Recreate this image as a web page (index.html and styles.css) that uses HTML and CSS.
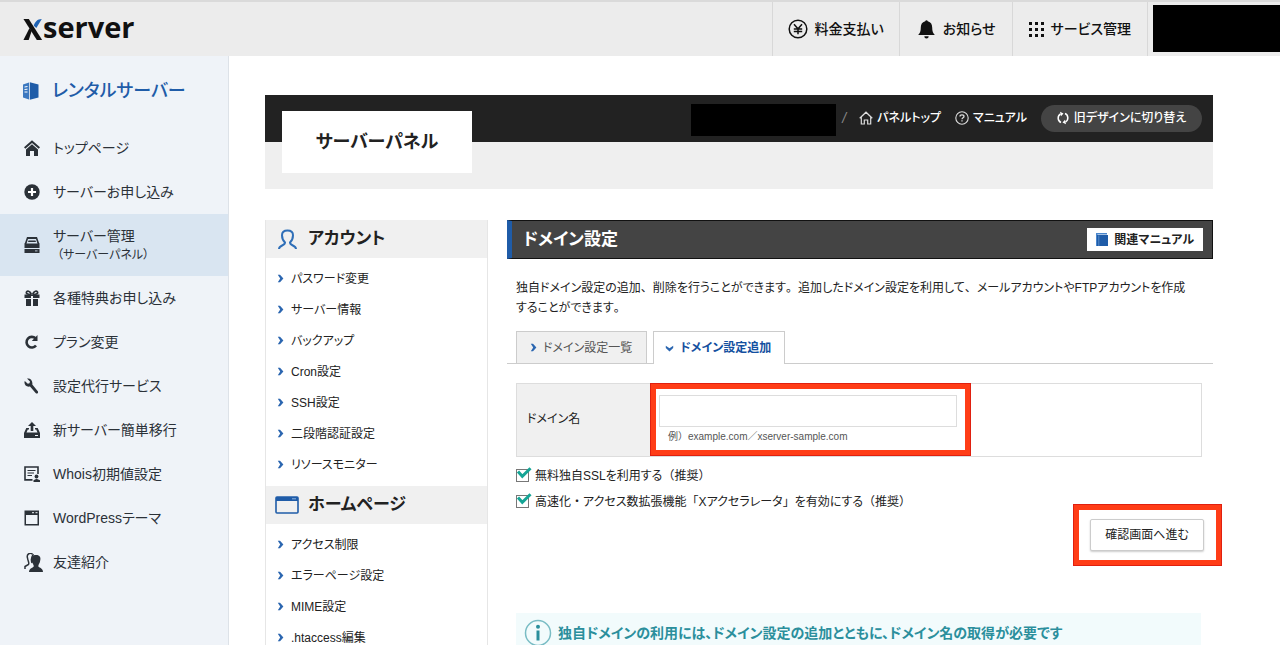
FILE: index.html
```html
<!DOCTYPE html>
<html lang="ja">
<head>
<meta charset="utf-8">
<meta name="viewport" content="width=device-width, initial-scale=1">
<title>ドメイン設定 | サーバーパネル</title>
<link rel="stylesheet" href="styles.css">
</head>
<body>
<svg class="defs" aria-hidden="true">
  <symbol id="chev" viewBox="0 0 7 9"><path d="M0.8 0.8H3L6.4 4.5 3 8.2H0.8L3.2 4.5z" fill="#2b66b0"/></symbol>
  <symbol id="tick" viewBox="0 0 16 15"><path d="M2 4.600L6.300 9.300 14.500 1.200" fill="none" stroke="#16a596" stroke-width="3"/></symbol>
</svg>
<div class="app">
  <header class="top">
    <a class="logo" href="#" aria-label="Xserver">
      <svg class="logo-x" viewBox="0 0 20 22" aria-hidden="true"><path d="M0 0H5.600L19.600 22H14z" fill="#111"/><path d="M8.600 12.600L5.500 22H0L6.200 9.600z" fill="#111"/><path d="M10.800 7C12 3 14.500 0 19.200 0L13.500 9.500z" fill="#1f63b5"/></svg><span>server</span>
    </a>
    <nav class="top-nav">
      <a href="#"><svg width="20" height="20" viewBox="0 0 20 20" fill="none" stroke="#111" stroke-width="1.5"><circle cx="10" cy="10" r="8.8"/><path d="M6 5.2L10 9.8 14 5.2M10 9.8V15.2M5.8 10H14.2M5.8 12.6H14.2"/></svg>料金支払い</a>
      <a href="#" class="news"><svg width="17" height="20" viewBox="0 0 17 20"><path d="M7.2 2.2a1.4 1.4 0 012.6 0C13 3 14.2 5.6 14.2 8.6c0 4 .8 5.6 2.6 7.4H.2C2 14.200 2.800 12.600 2.800 8.600c0-3 1.200-5.600 4.400-6.400zM6.300 17.200h4.400a2.200 2.200 0 01-4.400 0z" fill="#111"/></svg>お知らせ</a>
      <a href="#" class="svc"><svg width="15" height="15" viewBox="0 0 15 15"><path d="M0 0h3v3H0zM6 0h3v3H6zM12 0h3v3h-3zM0 6h3v3H0zM6 6h3v3H6zM12 6h3v3h-3zM0 12h3v3H0zM6 12h3v3H6zM12 12h3v3h-3z" fill="#111"/></svg>サービス管理</a>
      <div class="masked-user"></div>
    </nav>
  </header>
  <div class="body">
    <aside class="side">
      <a class="side-title" href="#"><svg width="16" height="18" viewBox="0 0 16 18"><path d="M0 2.500L6 .5V17.500L0 15.500z" fill="#3c78c0"/><path d="M6.800 0.300L15.500 2.600V15.400L6.800 17.700z" fill="#1f5ca8"/><path d="M1.500 5L4.500 4.500M1.500 7.500L4.500 7.200M1.500 10H4.500" stroke="#fff"/></svg>レンタルサーバー</a>
      <nav class="side-nav">
        <a href="#"><svg viewBox="0 0 16 16"><path d="M8 .3L16 7.200 14.700 8.700 8 3 1.300 8.700 0 7.200z"/><path d="M8 4.300L14 9.400V16H10V11H6V16H2V9.400z"/></svg>トップページ</a>
        <a href="#"><svg viewBox="0 0 16 16"><circle cx="8" cy="8" r="7.700"/><path d="M8 4V12M4 8H12" stroke="#fff" stroke-width="2.200"/></svg>サーバーお申し込み</a>
        <a href="#" class="current"><svg viewBox="0 0 16 16"><path d="M3 0H13L15.400 7H13.600L12 2H4L2.400 7H.6z"/><path d="M4.500 3.500H11.500L12 5H4zM0.500 6.500H15.500V11H.5zM.5 12H15.500V16H.5z"/><path d="M11 13.900H13.500" stroke="#d9e5f1" stroke-width=".8"/></svg><span>サーバー管理<small>（サーバーパネル）</small></span></a>
        <a href="#"><svg viewBox="0 0 16 16"><path d="M.5 4.500H15.500V8H9V6H7V8H.5zM2 9H7V16H2zM9 9H14V16H9z"/><path d="M7 4.500C3 4.500 2 3.500 2.500 2S6 .5 7.500 4.500M9 4.500C13 4.500 14 3.500 13.500 2S10 .5 8.500 4.500" fill="none" stroke="#2b3138" stroke-width="1.700"/></svg>各種特典お申し込み</a>
        <a href="#"><svg viewBox="0 0 16 16"><path d="M12 11.500A5.300 5.300 0 1111.500 4.300" fill="none" stroke="#2b3138" stroke-width="2.600"/><path d="M13.500 1V7H7.800z"/></svg>プラン変更</a>
        <a href="#"><svg viewBox="0 0 16 16"><path d="M3 .6L6 3.500 5.500 5.200 3.800 5.800.8 2.900C-.5 6 2 9.500 6 8.600L11.600 15C13 16.500 15 14.700 13.600 13L8.300 6.500C9 2.500 6 -.3 3 .6z"/></svg>設定代行サービス</a>
        <a href="#"><svg viewBox="0 0 16 16"><path d="M8 0L12 4H9.300V9H6.700V4H4z"/><path d="M2.300 6H5V7.500H3.800L2.500 10.500H13.500L12.200 7.500H11V6H13.700L16 11V16H0V11z"/><path d="M11 13.500H14" stroke="#eff3f8"/></svg>新サーバー簡単移行</a>
        <a href="#"><svg viewBox="0 0 16 16"><path d="M8.500 13.900H1V1H14V8" fill="none" stroke="#2b3138" stroke-width="1.600"/><path d="M3.500 4.500H11.500M3.500 7H10M3.500 9.500H8" stroke="#2b3138" stroke-width="1.200"/><circle cx="12.500" cy="10.500" r="1.900"/><path d="M9.500 16V14.300L12.500 12.800 16 14.300V16z"/></svg>Whois初期値設定</a>
        <a href="#"><svg viewBox="0 0 16 16"><path d="M.5 .5H15V15.500H.5zM2 5V14H13.500V5z" fill-rule="evenodd"/><path d="M8 2.700H10M11.500 2.700H13.500" stroke="#eff3f8"/></svg>WordPressテーマ</a>
        <a href="#"><svg class="wide" viewBox="0 0 19 19"><path d="M8.500 1C5 -1 2.500 2 3.500 5 4 8.500 5.500 9.500 4.500 11.500L1 13.500V16M9.500 1.300C7 4 7 7 8 10" fill="none" stroke="#2b3138" stroke-width="1.500"/><path d="M12 2C16 2 17 4.500 16.200 7.500 16 10 14.500 11 14.300 13 14.500 15 19 14.500 19 19H5C5 15 9.500 15 9.800 13 9.500 11 8 10 7.800 7.500 7 4.500 8 2 12 2z"/></svg>友達紹介</a>
      </nav>
    </aside>
    <main class="main">
      <div class="banner">
        <h1>サーバーパネル</h1>
        <nav class="banner-nav">
          <span class="masked-id"></span><i>/</i>
          <a href="#"><svg width="14" height="14" viewBox="0 0 14 14" fill="none" stroke="#ddd" stroke-width="1.200"><path d="M.7 7.300L7 1.200 13.300 7.300M2.300 6V13H5.300V9H8.700V13H11.700V6"/></svg>パネルトップ</a>
          <a href="#"><svg width="14" height="14" viewBox="0 0 14 14" fill="none" stroke="#ddd" stroke-width="1.100"><circle cx="7" cy="7" r="6.200"/><path d="M5 5.500C5 3.400 9 3.400 9 5.500 9 6.800 7 6.800 7 8.200M7 9.300V10.500" stroke-width="1.300"/></svg>マニュアル</a>
          <button class="pill" type="button"><svg width="12" height="14" viewBox="0 0 12 14" fill="none" stroke="#fff" stroke-width="1.500"><path d="M4 11.500A4.800 4.800 0 013.500 3M8 2.500A4.800 4.800 0 018.500 11"/><path d="M3 .8L6.500 2.500 4 5.200zM9 13.200L5.500 11.500 8 8.800z" fill="#fff" stroke="none"/></svg>旧デザインに切り替え</button>
        </nav>
      </div>
      <div class="cols">
        <nav class="menu">
          <h2><svg width="24" height="22" viewBox="0 0 24 22" fill="none" stroke="#2f6fb8" stroke-width="2"><path d="M4 21C4 17 10 18 10 14.500 8 12.500 7 9.500 7 7.200 7 4 9.300 2.500 12.500 2.500S18 4 18 7.200C18 9.500 17 12.500 15 14.500 15 18 21 17 21 21"/></svg>アカウント</h2>
          <ul>
            <li><a href="#"><svg><use href="#chev"/></svg>パスワード変更</a></li>
            <li><a href="#"><svg><use href="#chev"/></svg>サーバー情報</a></li>
            <li><a href="#"><svg><use href="#chev"/></svg>バックアップ</a></li>
            <li><a href="#"><svg><use href="#chev"/></svg>Cron設定</a></li>
            <li><a href="#"><svg><use href="#chev"/></svg>SSH設定</a></li>
            <li><a href="#"><svg><use href="#chev"/></svg>二段階認証設定</a></li>
            <li><a href="#"><svg><use href="#chev"/></svg>リソースモニター</a></li>
          </ul>
          <h2><svg width="24" height="18" viewBox="0 0 24 18"><rect x="1" y="1" width="22" height="16" rx="1" fill="none" stroke="#1f5ca8" stroke-width="1.600"/><path d="M1 1H23V5H1z" fill="#1f5ca8"/><path d="M17 2.800H21" stroke="#8fb4dd"/></svg>ホームページ</h2>
          <ul>
            <li><a href="#"><svg><use href="#chev"/></svg>アクセス制限</a></li>
            <li><a href="#"><svg><use href="#chev"/></svg>エラーページ設定</a></li>
            <li><a href="#"><svg><use href="#chev"/></svg>MIME設定</a></li>
            <li><a href="#"><svg><use href="#chev"/></svg>.htaccess編集</a></li>
          </ul>
        </nav>
        <section class="content">
          <div class="content-head">
            <h2>ドメイン設定</h2>
            <a href="#"><svg width="12" height="13" viewBox="0 0 12 13"><path d="M0 0H11V1.500H1.500V13H0z" fill="#4a86cc"/><path d="M1 2H12V13H1z" fill="#1f5ca8"/><path d="M2.800 2.500V13" stroke="#6fa0d8" stroke-width=".7"/></svg>関連マニュアル</a>
          </div>
          <p class="lead">独自ドメイン設定の追加<span class="full">、</span>削除を行うことができます<span class="full">。</span>追加したドメイン設定を利用して<span class="full">、</span>メールアカウントやFTPアカウントを作成することができます<span class="full">。</span></p>
          <div class="tabs">
            <a href="#"><svg><use href="#chev"/></svg>ドメイン設定一覧</a>
            <a href="#" class="on"><svg viewBox="0 0 9 7"><path d="M.8 .8V3L4.500 6.400 8.200 3V.8L4.500 3.200z" fill="#2b66b0"/></svg>ドメイン設定追加</a>
          </div>
          <form class="form">
            <div class="field">
              <label for="domain">ドメイン名</label>
              <div class="field-body">
                <input id="domain" type="text">
                <p>例<span class="full">）</span>example.com／xserver-sample.com</p>
                <span class="mark mark-field"></span>
              </div>
            </div>
            <label class="check"><span class="box"><input type="checkbox" checked><svg><use href="#tick"/></svg></span><span>無料独自SSLを利用する<span class="full">（</span>推奨<span class="full">）</span></span></label>
            <label class="check"><span class="box"><input type="checkbox" checked><svg><use href="#tick"/></svg></span><span>高速化<span class="full">・</span>アクセス数拡張機能<span class="full">「</span>Xアクセラレータ<span class="full">」</span>を有効にする<span class="full">（</span>推奨<span class="full">）</span></span></label>
            <div class="actions"><div class="action"><button type="submit">確認画面へ進む</button><span class="mark mark-button"></span></div></div>
          </form>
          <div class="info">
            <svg width="28" height="28" viewBox="0 0 28 28"><circle cx="14" cy="14" r="12.500" fill="none" stroke="#79bcc4" stroke-width="1.500"/><circle cx="14" cy="7.800" r="2" fill="#2b8f9c"/><path d="M14 11.500V21.500" stroke="#2b8f9c" stroke-width="3"/></svg>
            <strong>独自ドメインの利用には、ドメイン設定の追加とともに、ドメイン名の取得が必要です</strong>
          </div>
        </section>
      </div>
    </main>
  </div>
</div>
</body>
</html>
```
FILE: styles.css
```css
* { box-sizing: border-box; }
body {
  margin: 0;
  font-family: "Liberation Sans", "Noto Sans CJK JP", sans-serif;
  font-size: 12px;
  line-height: 20px;
  color: #222;
  background: #fff;
  font-feature-settings: "palt";
}
a { color: inherit; text-decoration: none; }
h1, h2, p, ul { margin: 0; padding: 0; }
ul { list-style: none; }
svg { flex: none; }
button { font: inherit; font-feature-settings: inherit; }
.defs { position: absolute; width: 0; height: 0; }
.full { font-feature-settings: normal; }

.app { display: flex; flex-direction: column; height: 100vh; overflow: hidden; }

/* Top bar */
.top {
  display: flex;
  flex: none;
  justify-content: space-between;
  height: 56px;
  background: #ececec;
  border-top: 2px solid #dadada;
}
.logo {
  display: flex;
  align-items: center;
  padding-left: 23px;
  font-family: "Open Sans", sans-serif;
  font-size: 29px;
  font-weight: 700;
  line-height: 32px;
  color: #111;
}
.logo-x { width: 20px; height: 21px; }
.logo span { padding-bottom: 4px; }
.top-nav { display: flex; font-size: 14px; font-weight: 500; color: #111; }
.top-nav a {
  display: flex;
  align-items: center;
  gap: 7px;
  padding: 0 15px;
  border-left: 1px solid #d8d8d8;
}
.top-nav .news { gap: 8px; padding: 0 16px 0 18px; }
.top-nav .svc { padding: 0 16px; border-right: 1px solid #d8d8d8; }
.masked-user { width: 127px; height: 47px; margin: 3px 0 0 5px; background: #000; }

.body { display: flex; flex: 1; min-height: 0; }

/* Service navigation */
.side {
  flex: none;
  width: 229px;
  background: #eff3f8;
  border-right: 1px solid #dde2e8;
}
.side-title {
  display: flex;
  align-items: center;
  gap: 13px;
  padding: 22px 0 22px 23px;
  font-size: 18px;
  font-weight: 500;
  line-height: 26px;
  color: #1f5ca8;
}
.side-nav { font-size: 14px; }
.side-nav a {
  display: flex;
  align-items: center;
  gap: 13px;
  height: 44px;
  padding-left: 24px;
  color: #2b3138;
}
.side-nav svg { width: 16px; height: 16px; fill: #2b3138; }
.side-nav .wide { width: 19px; height: 19px; margin-right: -3px; }
.side-nav .current { height: 62px; background: #d9e5f1; }
.side-nav small { display: block; font-size: 12px; line-height: 18px; padding-left: 4px; }

/* Panel banner */
.main { flex: 1; min-width: 0; padding: 39px 67px 0 36px; overflow: hidden; }
.banner {
  display: flex;
  justify-content: space-between;
  align-items: flex-start;
  height: 94px;
  padding-left: 17px;
  background: linear-gradient(#222 47px, #efefef 47px);
}
.banner h1 {
  width: 190px;
  margin-top: 16px;
  background: #fff;
  font-size: 18px;
  font-weight: 700;
  line-height: 62px;
  text-align: center;
}
.banner-nav {
  display: flex;
  align-items: center;
  gap: 14px;
  height: 46px;
  padding-right: 11px;
  font-weight: 500;
  color: #fff;
}
.banner-nav a { display: flex; align-items: center; gap: 4px; }
.banner-nav i { margin: 0 -1px 0 -8px; font-size: 14px; color: #888; }
.masked-id { width: 145px; height: 32px; background: #000; margin-top: 3px; }
.pill {
  display: flex;
  align-items: center;
  justify-content: center;
  gap: 5px;
  width: 161px;
  height: 27px;
  padding: 0;
  border: 0;
  border-radius: 14px;
  background: #444;
  color: #fff;
}

.cols { display: flex; align-items: flex-start; gap: 19px; margin-top: 31px; }

/* Panel menu */
.menu { flex: none; width: 223px; border: solid #e6e6e6; border-width: 0 1px; }
.menu h2 {
  display: flex;
  align-items: center;
  gap: 9px;
  height: 38px;
  padding-left: 9px;
  background: #f0f0f0;
  font-size: 17px;
  font-weight: 700;
}
.menu ul { padding: 5px 0 6px; }
.menu a { display: flex; align-items: center; gap: 7px; height: 31px; padding-left: 11px; }
.menu a svg, .tabs a svg { width: 7px; height: 9px; }

/* Content */
.content { flex: 1; min-width: 0; }
.content-head {
  display: flex;
  align-items: center;
  justify-content: space-between;
  height: 39px;
  padding: 0 9px 0 11px;
  border: solid #111;
  border-width: 1px 1px 1px 0;
  border-left: 5px solid #1f5ca8;
  background: #444;
}
.content-head h2 { font-size: 17px; font-weight: 700; color: #fff; }
.content-head a {
  display: flex;
  align-items: center;
  gap: 6px;
  height: 23px;
  padding: 0 9px;
  background: #fff;
  font-weight: 700;
}
.lead { padding: 19px 20px 13px 9px; }
.tabs { display: flex; gap: 6px; padding-left: 9px; border-bottom: 1px solid #ccc; }
.tabs a {
  display: flex;
  align-items: center;
  gap: 6px;
  height: 32px;
  padding: 0 14px 0 13px;
  border: 1px solid #ccc;
  border-bottom: 0;
  background: #f0f0f0;
  color: #555;
}
.tabs .on { height: 33px; margin-bottom: -1px; padding: 0 13px 0 11px; background: #fff; color: #1450a0; font-weight: 700; }
.tabs .on svg { width: 9px; height: 7px; }
.form { padding: 19px 11px 0 9px; }
.field { display: flex; margin-bottom: 6px; border: 1px solid #ddd; }
.field > label { display: flex; align-items: center; width: 134px; padding: 0 0 2px 10px; background: #f0f0f0; }
.field-body { position: relative; flex: 1; padding: 11px 8px 9px; }
.field-body input { display: block; width: 298px; height: 32px; padding: 0 8px; border: 1px solid #ddd; }
.field-body p { padding-left: 9px; font-size: 10px; color: #555; }
.mark { position: absolute; border: 6px solid #ff3d17; outline: 1px solid #e02010; outline-offset: -1px; pointer-events: none; }
.mark-field { left: -1px; top: -1px; width: 321px; height: 73px; }
.check { display: flex; align-items: center; gap: 3px; height: 26px; }
.box { display: grid; width: 16px; height: 15px; margin-bottom: 4px; }
.box > * { grid-area: 1 / 1; }
.box input { appearance: none; align-self: end; width: 13px; height: 13px; margin: 0; border: 1px solid #777; background: #fff; }
.box svg { width: 16px; height: 15px; pointer-events: none; z-index: 1; }
.actions { display: flex; justify-content: flex-end; padding-top: 4px; }
.action { position: relative; margin-right: -2px; }
.action button {
  display: block;
  width: 114px;
  height: 32px;
  padding: 0;
  border: 1px solid #ccc;
  border-radius: 2px;
  background: #fff;
  box-shadow: 0 1px 2px rgba(0, 0, 0, .2);
  color: #222;
}
.mark-button { left: -17px; top: -15px; width: 149px; height: 62px; }
.info {
  display: flex;
  align-items: center;
  gap: 6px;
  height: 80px;
  margin: 62px 12px 0 9px;
  padding: 0 8px 40px;
  background: #f2fbfc;
  color: #2b8f9c;
  font-size: 14px;
}
```
